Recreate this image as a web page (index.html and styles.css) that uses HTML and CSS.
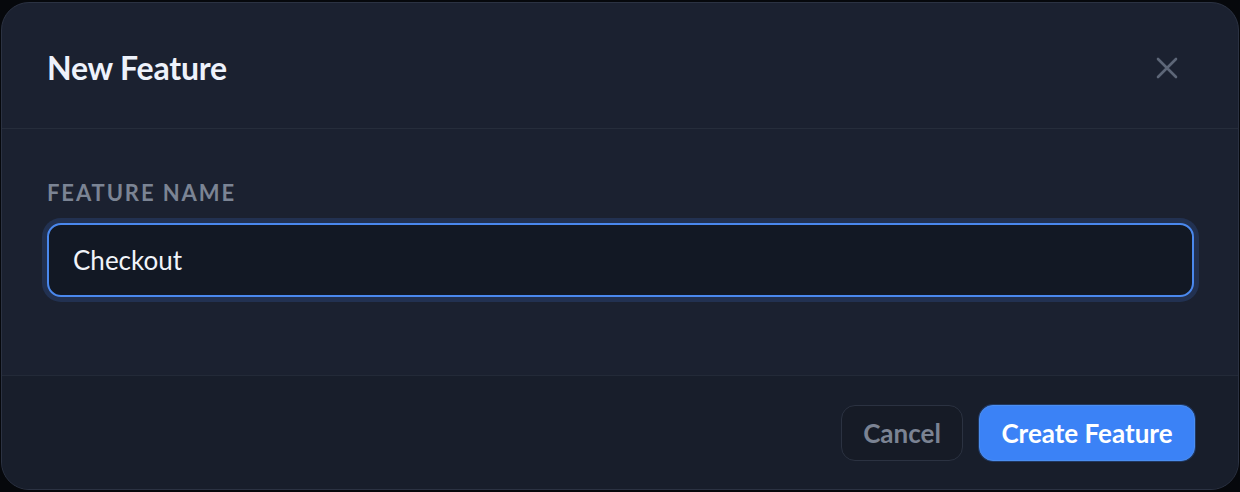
FILE: index.html
```html
<!DOCTYPE html>
<html lang="en">
<head>
<meta charset="utf-8">
<title>New Feature</title>
<link rel="stylesheet" href="styles.css">
</head>
<body>
<div class="modal">
  <header class="modal-header">
    <h2 class="modal-title">New Feature</h2>
    <button class="close-btn" aria-label="Close">
      <svg width="22" height="22" viewBox="0 0 22 22" fill="none" stroke="currentColor" stroke-width="2.6" stroke-linecap="round"><path d="M2 2L20 20M20 2L2 20"/></svg>
    </button>
  </header>
  <section class="modal-body">
    <label class="field-label" for="fname">Feature Name</label>
    <div class="input-wrap">
      <input id="fname" class="text-input" type="text" value="Checkout">
    </div>
  </section>
  <footer class="modal-footer">
    <button class="btn btn-secondary">Cancel</button>
    <button class="btn btn-primary">Create Feature</button>
  </footer>
</div>
</body>
</html>
```
FILE: styles.css
```css
* { box-sizing: border-box; }
html, body { margin: 0; padding: 0; }
body {
  background: #06080c;
  width: 1240px;
  height: 492px;
  overflow: hidden;
  font-family: "Lato", "Noto Sans", sans-serif;
}
.modal {
  margin: 2px 0 0 1px;
  width: 1238px;
  height: 488px;
  background: #1b2130;
  border: 1px solid #2b3242;
  border-radius: 28px;
  overflow: hidden;
  display: flex;
  flex-direction: column;
}
.modal-header {
  height: 126px;
  flex: none;
  padding: 4px 45px 0 45px;
  display: flex;
  align-items: center;
  justify-content: space-between;
  border-bottom: 1px solid #262d3b;
}
.modal-title {
  margin: 0;
  font-size: 32px;
  font-weight: 700;
  color: #eef2fb;
  letter-spacing: -0.2px;
}
.close-btn {
  background: none;
  border: none;
  padding: 0;
  margin-right: 15px;
  width: 22px;
  height: 22px;
  color: #5d6677;
  display: flex;
  cursor: pointer;
}
.modal-body {
  flex: 1;
  padding: 51px 45px 0 45px;
  display: flex;
  flex-direction: column;
}
.field-label {
  font-size: 22px;
  font-weight: 700;
  letter-spacing: 1.9px;
  text-transform: uppercase;
  color: #7b8494;
  line-height: 26px;
}
.input-wrap {
  margin-top: 17px;
}
.text-input {
  display: block;
  width: 1147px;
  height: 74px;
  background: #121824;
  border: 2px solid #4a88ee;
  border-radius: 14px;
  box-shadow: 0 0 0 5px rgba(59, 110, 200, 0.22);
  padding: 0 24px;
  font-family: inherit;
  font-size: 26px;
  color: #f1f4fa;
  outline: none;
}
.modal-footer {
  height: 114px;
  flex: none;
  background: #181e2b;
  border-top: 1px solid #232a38;
  display: flex;
  align-items: center;
  justify-content: flex-end;
  gap: 16px;
  padding: 0 43px 0 46px;
}
.btn {
  height: 56px;
  border-radius: 14px;
  font-family: inherit;
  font-size: 26px;
  font-weight: 700;
  cursor: pointer;
}
.btn-secondary {
  width: 122px;
  background: #161b26;
  border: 1px solid #2b3241;
  color: #7b8393;
}
.btn-primary {
  width: 216px;
  background: #3b82f6;
  border: 1px solid #4b8ef0;
  color: #ffffff;
  box-shadow: 0 0 0 1px rgba(40, 80, 150, 0.5);
}
```
